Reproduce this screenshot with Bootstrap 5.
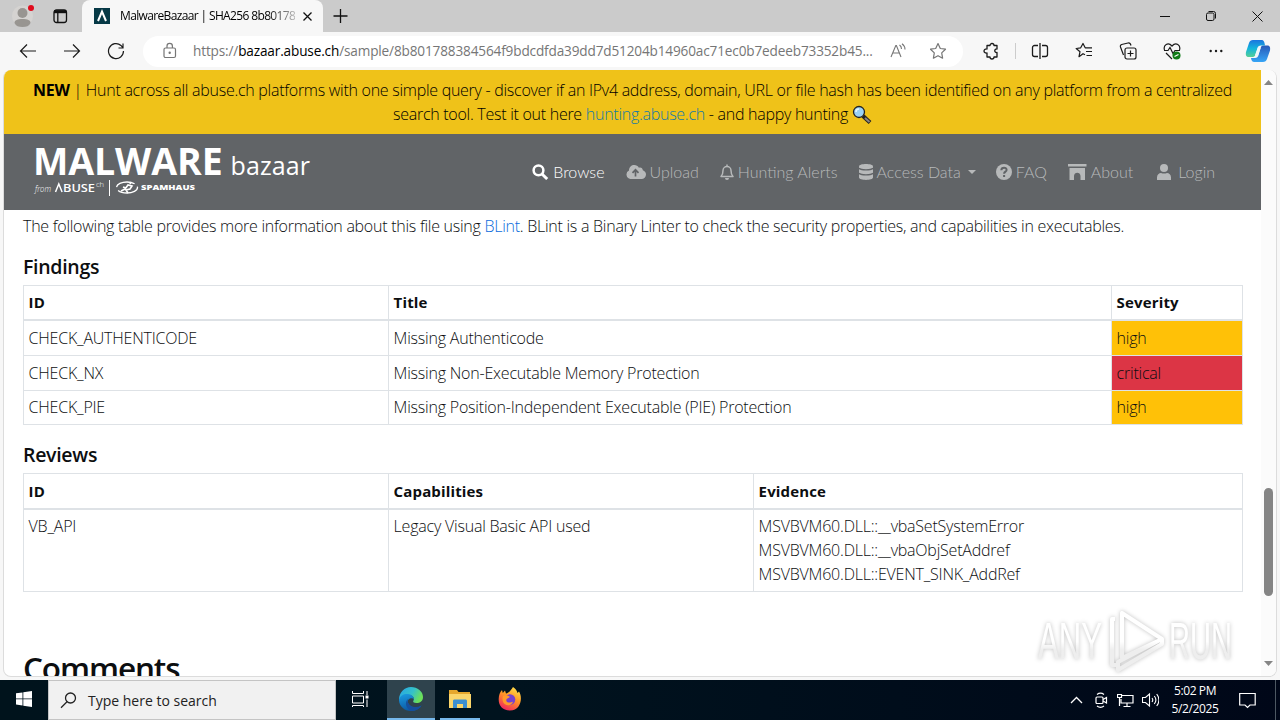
<!DOCTYPE html>
<html lang="en">

<head>
  <meta charset="utf-8" />
  <meta name="viewport" content="width=device-width, initial-scale=1.0" />
  <title>MalwareBazaar | SHA256 8b801788</title>
  <link href="https://cdn.jsdelivr.net/npm/bootstrap@5.3.0/dist/css/bootstrap.min.css" rel="stylesheet">
  <style>
    :root {
      --strip: #cbcbcb;
      --toolbar: #f7f7f7;
      --banner: #efc219;
      --nav-gray: #616467;
      --line: #dee2e6;
    }

    body {
      width: 1280px;
      height: 720px;
      overflow: hidden;
      background: var(--toolbar);
      font-family: "Open Sans", sans-serif;
      color: #0c0e10;
    }

    svg {
      display: block;
      flex: none;
      fill: none;
      stroke: currentColor;
    }

    .solid {
      fill: currentColor;
      stroke: none;
    }

    .tab-strip {
      height: 32px;
      padding: 0 17px 0 12px;
      background: var(--strip);
      color: #111;
    }

    .window-buttons {
      gap: 36px;
    }

    .browser-tab {
      width: 241px;
      height: 32px;
      margin-left: 10px;
      padding: 0 11px 0 12px;
      background: var(--toolbar);
      border-radius: 8px 8px 0 0;
    }

    .tab-title {
      margin-left: 10px;
      font-size: 12px;
      letter-spacing: -.64px;
      white-space: nowrap;
      color: #000;
      -webkit-mask-image: linear-gradient(90deg, #000 84%, rgba(0, 0, 0, .25) 100%);
    }

    .toolbar {
      height: 38px;
      padding-left: 19px;
      color: #1b1b1b;
    }

    .nav-buttons {
      gap: 26px;
    }

    .address {
      width: 820px;
      height: 31px;
      margin-left: 18px;
      padding-left: 19px;
      background: #fff;
      border-radius: 16px;
      color: #767676;
    }

    .url {
      width: 681px;
      margin-left: 16px;
      font-size: 13.6px;
      letter-spacing: -.15px;
      white-space: nowrap;
    }

    .viewport-frame {
      width: 1274px;
      height: 607px;
      margin-left: 3px;
      border: 1px solid #dcdcdc;
      border-top: 0;
      border-radius: 8px;
      background: #fff;
    }

    .page {
      width: 1257px;
      height: 606px;
      font-weight: 300;
      letter-spacing: -.26px;
    }

    .banner {
      height: 64px;
      padding-top: 8px;
      background: var(--banner);
      color: #000;
      line-height: 24px;
      letter-spacing: -.27px;
    }

    .banner a {
      color: #1379a8;
    }

    .site-nav {
      height: 76px;
      padding: 0 46px 0 29px;
      background: var(--nav-gray);
      color: #b7b9ba;
      font-family: Lato, sans-serif;
      letter-spacing: 0;
    }

    .logo-row {
      height: 32px;
      gap: 8px;
    }

    .logo-big {
      font: 700 37.5px/32px "Open Sans", sans-serif;
      letter-spacing: -.1px;
      color: #fff;
    }

    .logo-small {
      font: 400 25px/32px "Open Sans", sans-serif;
      letter-spacing: .1px;
      color: #fff;
    }

    .site-links {
      gap: 21px;
    }

    .site-links>div {
      display: flex;
      align-items: center;
      gap: 4px;
    }

    .caret-down {
      margin: 0 -1px 0 3px;
      border: 4px solid transparent;
      border-top-color: currentColor;
      border-bottom: 0;
    }

    .content {
      padding: 4px 18px 0 19px;
      line-height: 24px;
    }

    .content p {
      margin-bottom: 17px;
    }

    .content a {
      color: #0a6bdc;
    }

    .content h5 {
      margin-bottom: 6px;
      font-size: 19.5px;
      line-height: 24px;
      font-weight: 600;
      letter-spacing: -.3px;
    }

    .content h2 {
      margin-top: 58px;
      font-size: 31.5px;
      line-height: 36px;
      font-weight: 600;
      letter-spacing: -1.1px;
      white-space: nowrap;
    }

    .grid-table {
      table-layout: fixed;
      margin-bottom: 18px;
      width: 1220px;
      border-color: var(--line);
      color: inherit;
      letter-spacing: -.21px;
    }

    .grid-table> :not(caption)>*>* {
      padding: 4.8px 4.8px 4.8px 4.6px;
      border-width: 1px;
      color: inherit;
    }

    .grid-table>thead>tr>th {
      padding: 4.4px 4.8px 5px 4.6px;
      border-bottom-width: 2px;
      font-weight: 700;
      font-size: 15px;
      letter-spacing: .15px;
    }

    .grid-table td.sev-high {
      background: #ffc107;
    }

    .grid-table td.sev-critical {
      background: #dc3545;
    }

    .col-id {
      width: 365px;
    }

    .col-sev {
      width: 131px;
    }

    .scrollbar {
      width: 15px;
      padding: 10px 0 10px;
      background: #fbfbfb;
      color: #858585;
    }

    .thumb {
      width: 9px;
      height: 108px;
      margin: 403px 0 auto;
      border-radius: 5px;
      background: #858585;
    }

    .watermark {
      left: 1030px;
      top: 602px;
      filter: drop-shadow(0 0 2px rgba(0, 0, 0, .25));
    }

    .taskbar {
      height: 40px;
      margin-top: 3px;
      background: linear-gradient(90deg, #00131c, #00131e 40%, #000718);
      color: #fff;
    }

    .search-box {
      width: 288px;
      height: 40px;
      padding-left: 11px;
      gap: 11px;
      background: #f1f1f1;
      border: 1px solid #c4c4c4;
      color: #222;
      font-size: 14px;
    }

    .task-app {
      width: 48px;
      height: 40px;
      border-bottom: 2px solid transparent;
    }

    .task-app.running {
      border-bottom-color: #76b9ed;
    }

    .task-app.slim {
      width: 40px;
      margin-left: 5px;
    }

    .task-app.focused {
      margin-left: 3px;
      background: #2f434d;
    }

    .clock {
      width: 54px;
      margin: 0 17px 0 9px;
      font-size: 12px;
      line-height: 18px;
      letter-spacing: -.4px;
    }

    .show-desktop {
      height: 40px;
      margin: 0 4px 0 19px;
      border-left: 1px solid #4d5862;
    }
  </style>
</head>

<body>
  <header class="tab-strip d-flex align-items-center">
    <svg width="22" height="24" viewBox="0 0 22 24">
      <circle cx="10.500" cy="12" r="10.500" fill="#d5d3d1" stroke="none" />
      <circle cx="10.500" cy="9" r="5" fill="#989591" stroke="none" />
      <path d="M2.500 19c0-3 3-4 8-4s8 1 8 4c-1.500 3-4 4-8 4s-6.500-1-8-4z" fill="#989591" stroke="none" />
      <circle cx="19" cy="4" r="3" fill="#e00b1c" stroke="none" />
    </svg>
    <svg width="18" height="16" viewBox="-2 0 18 16" stroke-width="1.300" class="ms-3 me-1">
      <rect x="2" y="2" width="12.500" height="12.500" rx="2.500" />
      <path d="M2 3.700h12" stroke-width="3" /><path d="M5.800 4v10" />
    </svg>
    <div class="browser-tab d-flex align-items-center">
      <svg width="16" height="16" viewBox="0 0 16 16">
        <rect width="16" height="16" fill="#063946" stroke="none" />
        <path d="M4 13 8 3.500l4 9.500" stroke="#fff" stroke-width="2" />
      </svg>
      <span class="tab-title">MalwareBazaar | SHA256 8b80178</span>
      <svg width="9" height="9" viewBox="0 0 9 9" stroke-width="1.300" class="ms-auto"><path d="m.5.5 8 8m0-8-8 8" /></svg>
    </div>
    <svg width="34" height="14" viewBox="0 0 34 14" stroke-width="1.300"><path d="M17.500 0v14M10.500 7h14" /></svg>
    <div class="window-buttons d-flex align-items-center ms-auto">
      <svg width="10" height="10" viewBox="0 0 10 10"><path d="M0 5.500h10" /></svg>
      <svg width="10" height="10" viewBox="0 0 10 10"><rect x=".5" y="2" width="7.500" height="7.500" rx="1.500" /><path d="M2.500.5h5a2 2 0 0 1 2 2v5" /></svg>
      <svg width="11" height="11" viewBox="0 0 11 11"><path d="m.5.5 10 10m0-10-10 10" /></svg>
    </div>
  </header>

  <div class="toolbar d-flex align-items-center">
    <div class="nav-buttons d-flex align-items-center">
      <svg width="18" height="16" viewBox="0 0 18 16" stroke-width="1.200"><path d="M17 8H1.500M8 1.500 1.500 8 8 14.500" /></svg>
      <svg width="18" height="16" viewBox="0 0 18 16" stroke-width="1.200"><path d="M1 8h15.500M10 1.500 16.500 8 10 14.500" /></svg>
      <svg width="18" height="18" viewBox="0 0 18 18" stroke-width="1.200"><path d="M16.500 9A7.500 7.500 0 1 1 14 3.500L16 6M16 1.500V6h-4.500" /></svg>
    </div>
    <div class="address d-flex align-items-center">
      <svg width="15" height="18" viewBox="0 0 15 18" stroke-width="1.200"><rect x="2" y="6" width="11.500" height="9.500" rx="1.500" /><path d="M5 6V4a2.700 2.700 0 0 1 5.400 0v2" /><circle cx="7.700" cy="10.800" r=".6" /></svg>
      <div class="url">https://<span class="text-black">bazaar.abuse.ch</span>/sample/8b801788384564f9bdcdfda39dd7d51204b14960ac71ec0b7edeeb73352b45...</div>
      <svg width="16" height="16" viewBox="0 0 16 16" stroke-width="1.100" class="ms-3"><path d="M1 14 5.800 2.500h.6L11 14M2.800 10h6.400M9.500 2c1.500 1 2 2.300 2 4M12 .8C14.300 2.500 15 4 15 6.500" /></svg>
      <svg width="18" height="18" viewBox="0 0 18 18" stroke-width="1.200" stroke-linejoin="round" class="ms-4"><path d="m8 1.500 2.300 5 5.200.7-3.800 3.700.9 5.300L8 13.700l-4.600 2.500.9-5.300L.5 7.200l5.200-.7z" /></svg>
    </div>
    <svg width="38" height="18" viewBox="-19 0 38 18" stroke-width="1.300" stroke-linejoin="round"><path d="M5 3.500h3a2 2 0 0 1 4 0h3V7c-3-.5-3 4 0 3.500V15h-3a2 2 0 0 1-4 0H5v-4C1 11.500 1 6.500 5 7z" /></svg>
    <svg width="30" height="18" viewBox="0 0 30 18"><path d="M14.500 1v16" stroke="#ccc" /></svg>
    <div class="nav-buttons d-flex align-items-center">
      <svg width="18" height="18" viewBox="0 0 18 18" stroke-width="1.300"><path d="M9 1v16M7 3.500H3.500a2 2 0 0 0-2 2v7a2 2 0 0 0 2 2H7M11 3.500h3.500a2 2 0 0 1 2 2v7a2 2 0 0 1-2 2H11" /></svg>
      <svg width="18" height="18" viewBox="0 0 18 18" stroke-width="1.200" stroke-linejoin="round"><path d="M10 12.800 8 11.700l-4 3 1-5L1.200 6.500l4.500-.7L8 1.500l2.200 4.300H17M11 9.500h6M11.500 13.500H17" /></svg>
      <svg width="18" height="18" viewBox="0 0 18 18" stroke-width="1.200"><rect x="6" y="6" width="11" height="11" rx="2" /><path d="M11.500 8.500v6M8.500 11.500h6M4.500 13 1.500 5a2 2 0 0 1 1.200-2.500L9 1c1.500-.3 2.500.5 3 2.500" /></svg>
      <svg width="18" height="18" viewBox="0 0 18 18" stroke-width="1.200"><path d="M1.500 8C0 3 5-.5 9 4c4-4.500 9-1 7.500 4M1 8.500h4L7 5.500l3 6 2-3h5M3 11l6 6" /><circle cx="13.500" cy="13.500" r="4" fill="#0f7b16" stroke="none" /><path d="m11.500 14.500 4-2" stroke="#fff" /></svg>
      <svg width="18" height="4" viewBox="-2 0 18 4" class="solid"><circle cx="1.700" cy="2" r="1.200" /><circle cx="7" cy="2" r="1.200" /><circle cx="12.300" cy="2" r="1.200" /></svg>
    </div>
    <svg width="46" height="24" viewBox="-20 0 46 24">
      <defs>
        <linearGradient id="copA" x2="0" y2="1"><stop stop-color="#1a75df" /><stop offset=".5" stop-color="#13b5dc" /><stop offset="1" stop-color="#56cf96" /></linearGradient>
        <linearGradient id="copB" x2="0" y2="1"><stop stop-color="#2759b8" /><stop offset="1" stop-color="#36a5f6" /></linearGradient>
      </defs>
      <path d="M18 23h-8c-3 0-3.500-1.500-4-4h4c2 0 3-1 3.500-3l2-7c.6-2 1.500-2.500 4-2.500H22c3 0 3.500 2 3 5L22 20c-.6 2-2 3-4 3z" fill="url(#copB)" stroke="none" />
      <path d="M8 1h8c3 0 3.500 2 4 5.500h-4c-2 0-3 1-3.500 3l-2 6c-.6 2-1.500 2.500-4 2.500H4c-3 0-3.500-2-3-5L4 4c.6-2 2-3 4-3z" fill="url(#copA)" stroke="none" />
      <path d="m14.500 8-3 8.500" stroke="#eef6fb" stroke-width="3" />
    </svg>
  </div>

  <div class="viewport-frame d-flex overflow-hidden">
    <div class="page overflow-hidden">
      <div class="banner text-center">
        <span class="fw-bold">NEW</span> | Hunt across all abuse.ch platforms with one simple query - discover if an IPv4 address, domain, URL or file hash has been identified on any platform from a centralized<br>
        search tool. Test it out here <a href="#" class="text-decoration-none">hunting.abuse.ch</a> - and happy hunting
        <svg width="20" height="20" viewBox="0 0 20 20" class="d-inline-block align-text-bottom"><path d="m11 11 7 6.500" stroke="#222" stroke-width="4" /><path d="m13 13 4.500 4" stroke="#8b8680" stroke-width="2" /><circle cx="7" cy="7" r="5.500" fill="#9bd2f5" stroke="#222" stroke-width="1.300" /><path d="M4 7a3 3 0 0 1 3-3" stroke="#e6f6ff" stroke-width="1.500" /></svg>
      </div>

      <nav class="site-nav d-flex align-items-center">
        <div class="me-auto">
          <div class="logo-row d-flex align-items-baseline"><span class="logo-big">MALWARE</span><span class="logo-small">bazaar</span></div>
          <svg width="170" height="22" viewBox="-1 -1 170 22" class="text-white">
            <g class="solid" font-family="Open Sans">
              <text x="1" y="14" font-size="8.500" font-style="italic" textLength="16" lengthAdjust="spacingAndGlyphs">from</text>
              <text x="29" y="14" font-size="11.500" font-weight="600" textLength="32" lengthAdjust="spacingAndGlyphs">BUSE</text>
              <text x="62" y="9" font-size="7.500" textLength="8">ch</text>
              <text x="107" y="12" font-size="7.500" font-weight="800" textLength="54" lengthAdjust="spacingAndGlyphs">SPAMHAUS</text>
            </g>
            <path d="m21.500 14 3.300-8 3.300 8" stroke-width="1.500" />
            <path d="M75.500 2v16" />
            <ellipse cx="93" cy="9.500" rx="10.500" ry="5.500" stroke-width="1.300" stroke-dasharray="22 4 20 4" />
            <path d="m87 13 4-2 3-4 4 1-2 3-4 1 2 3m-5-6 3 1m4-4 1-2" stroke-width="1.600" />
          </svg>
        </div>
        <div class="site-links d-flex align-items-center">
          <div class="text-white">
            <svg width="17" height="16" viewBox="0 0 17 16"><circle cx="6.500" cy="6.300" r="4.900" stroke-width="2.500" /><path d="m10 10 5.200 5" stroke-width="3" /></svg>
            <span>Browse</span>
          </div>
          <div>
            <svg width="20" height="16" viewBox="0 0 20 16"><path class="solid" d="M4.500 15A4.500 4.500 0 0 1 3 6.500C3 3 5.500 1 8.300 1c2 0 3.700 1 4.600 2.700 2-.8 3.900.6 3.900 2.600C18.800 7 20 8.600 20 10.500c0 2.500-2 4.500-4.500 4.500z" /><path d="M9.500 12.500V6M6.500 8.800l3-3 3 3" stroke="#616467" stroke-width="1.700" /></svg>
            <span>Upload</span>
          </div>
          <div>
            <svg width="14" height="17" viewBox="0 0 14 17" stroke-width="1.500"><path d="M1 12.500c2-2 2-3.500 2-6a4 4 0 0 1 8 0c0 2.500 0 4 2 6zM7 .5v2" stroke-linejoin="round" /><path class="solid" d="M5 14h4a2 2 0 0 1-4 0z" /></svg>
            <span>Hunting Alerts</span>
          </div>
          <div>
            <svg width="14" height="16" viewBox="0 0 14 16"><path class="solid" d="M0 2.500C0-.7 14-.7 14 2.500v11c0 3.200-14 3.200-14 0z" /><path d="M0 4.300c2 2 12 2 14 0M0 9.300c2 2 12 2 14 0" stroke="#616467" stroke-width="1.300" /></svg>
            <span>Access Data</span><span class="caret-down"></span>
          </div>
          <div>
            <svg width="16" height="16" viewBox="0 0 16 16"><circle class="solid" cx="8" cy="8" r="8" /><path d="M5.300 6.200C5.500 2.700 10.800 3 10.600 6c-.1 1.700-2.500 1.700-2.500 3.700M8.100 11v2" stroke="#616467" stroke-width="2" /></svg>
            <span>FAQ</span>
          </div>
          <div>
            <svg width="19" height="16" viewBox="0 0 19 16" class="solid"><path d="M0 0h18.500v2.500H0zM1.500 4H17v12h-4.500v-4c0-4.500-6.500-4.500-6.500 0v4H1.500z" /></svg>
            <span>About</span>
          </div>
          <div>
            <svg width="20" height="16" viewBox="-3 0 20 16" class="solid"><circle cx="7" cy="4" r="4" /><path d="M0 16v-2.500C0 10.500 2 9 4 9c2 .8 4 .8 6 0 2 0 4 1.500 4 4.500V16z" /></svg>
            <span>Login</span>
          </div>
        </div>
      </nav>

      <main class="content">
        <p>The following table provides more information about this file using <a href="#" class="text-decoration-none">BLint</a>. BLint is a Binary Linter to check the security properties, and capabilities in executables.</p>

        <h5>Findings</h5>
        <table class="table grid-table">
          <colgroup><col class="col-id"><col><col class="col-sev"></colgroup>
          <thead>
            <tr><th>ID</th><th>Title</th><th>Severity</th></tr>
          </thead>
          <tbody>
            <tr><td>CHECK_AUTHENTICODE</td><td>Missing Authenticode</td><td class="sev-high">high</td></tr>
            <tr><td>CHECK_NX</td><td>Missing Non-Executable Memory Protection</td><td class="sev-critical">critical</td></tr>
            <tr><td>CHECK_PIE</td><td>Missing Position-Independent Executable (PIE) Protection</td><td class="sev-high">high</td></tr>
          </tbody>
        </table>

        <h5>Reviews</h5>
        <table class="table grid-table">
          <colgroup><col class="col-id"><col class="col-id"><col></colgroup>
          <thead>
            <tr><th>ID</th><th>Capabilities</th><th>Evidence</th></tr>
          </thead>
          <tbody>
            <tr>
              <td>VB_API</td>
              <td>Legacy Visual Basic API used</td>
              <td>MSVBVM60.DLL::__vbaSetSystemError<br>MSVBVM60.DLL::__vbaObjSetAddref<br>MSVBVM60.DLL::EVENT_SINK_AddRef</td>
            </tr>
          </tbody>
        </table>

        <h2>Comments</h2>
      </main>
    </div>
    <div class="scrollbar d-flex flex-column align-items-center">
      <svg width="9" height="5" viewBox="0 0 9 5" class="solid"><path d="M0 5 4.500 0 9 5z" /></svg>
      <div class="thumb"></div>
      <svg width="9" height="5" viewBox="0 0 9 5" class="solid"><path d="m0 0 4.500 5L9 0z" /></svg>
    </div>
  </div>

  <footer class="taskbar d-flex align-items-center">
    <div class="task-app d-flex align-items-center justify-content-center">
      <svg width="16" height="16" viewBox="0 0 16 16" class="solid"><path d="m0 2.300 6.500-.9v6.100H0zM7.300 1.300 16 0v7.500H7.300zM0 8.300h6.500v6.100L0 13.500zM7.300 8.300H16V16l-8.700-1.300z" /></svg>
    </div>
    <div class="search-box d-flex align-items-center">
      <svg width="17" height="17" viewBox="0 0 17 17" stroke-width="1.300"><circle cx="10.500" cy="6" r="5" /><path d="m7 9.700-6 6" /></svg>
      <span>Type here to search</span>
    </div>
    <div class="task-app d-flex align-items-center justify-content-center">
      <svg width="17" height="16" viewBox="0 0 17 16"><path d="M.5 0v2.500h11V0M.5 5h11v7H.5zM.5 16v-1.500h11V16M15 0v4M15 8.500V16" /><path class="solid" d="M13.500 4.500h3v3h-3z" /></svg>
    </div>
    <div class="task-app running focused d-flex align-items-center justify-content-center">
      <svg width="24" height="24" viewBox="0 0 24 24">
        <defs>
          <linearGradient id="edgeTop" y2=".4"><stop stop-color="#25a4e8" /><stop offset=".6" stop-color="#35c1c9" /><stop offset="1" stop-color="#6be05a" /></linearGradient>
          <linearGradient id="edgeLow" x2=".3" y2="1"><stop stop-color="#1b9de2" /><stop offset="1" stop-color="#0c59a4" /></linearGradient>
        </defs>
        <g stroke="none">
          <path d="M0 12C.5 5 5.500 0 12 0s12 4.500 12 10c0 4-3 6-6.500 6-3 0-4-1-3-2.500C16 11 13.500 8 9.500 8 5 8 1.500 10 0 14z" fill="url(#edgeTop)" />
          <path d="M0 12.500C1 8.500 5 6.500 9 7c3.500.3 6 2.700 6 5.500-1-1.300-2.500-1.500-4-1-3 1-3 5 .5 7.500 3 2 7.500 2 11-.5C20 22.500 16 24 12 24 5 24-.3 18.500 0 12.500z" fill="url(#edgeLow)" />
          <path d="M9 12c-3.500 3-2.500 9 3 12 4 0 8-1.500 10.500-5.500-4 2-8 2-11 0C8.800 16.500 8 14 9 12z" fill="#164f9d" />
        </g>
      </svg>
    </div>
    <div class="task-app running slim d-flex align-items-center justify-content-center">
      <svg width="22" height="20" viewBox="0 0 22 20"><g stroke="none"><path d="M0 1h8l1.500 2H21v16H0z" fill="#e6a72c" /><path d="M0 5h22v14H0z" fill="#fbd56a" /><path d="M4 19v-7c0-1 .7-1.500 1.500-1.500h11c.8 0 1.500.5 1.500 1.500v7h-4v-4H8v4z" fill="#3d8fd0" /></g></svg>
    </div>
    <div class="task-app d-flex align-items-center justify-content-center ms-1 ps-1">
      <svg width="24" height="24" viewBox="0 0 24 24">
        <defs><linearGradient id="fox" x1=".8" x2=".3" y2="1"><stop stop-color="#ffe34d" /><stop offset=".45" stop-color="#ff9825" /><stop offset="1" stop-color="#f0245e" /></linearGradient></defs>
        <g stroke="none">
          <path d="M15 0c3 2 4 4 4.500 6l1.500-1.500c4 6 2 19-9 19C4 23.500.5 18 .7 12 .8 8 2 5 4 3l.8 3L7 3.500l1 3C11 6 13 3 15 0z" fill="url(#fox)" />
          <circle cx="12" cy="12.500" r="5.300" fill="#7641cf" />
          <path d="M5 9c2-1.500 5-1 7 1l-2.500 1.500c-2 .8-1.500 3.500 1 4 2 .3 3-.8 4.500-.8-1 3.500-5 4.500-8 2.500C4.500 15.500 4 12 5 9z" fill="#ff9a2b" />
        </g>
      </svg>
    </div>

    <div class="d-flex align-items-center gap-2 ms-auto">
      <svg width="16" height="16" viewBox="0 0 16 16" stroke-width="1.300"><path d="m2 11 5.500-5.500L13 11" /></svg>
      <svg width="16" height="16" viewBox="-1 0 16 16" stroke-width="1.200"><rect x="2" y="5" width="7" height="6.500" rx="1" /><path d="m9 7.500 3.500-2v5.500L9 9M3 2.500c2-1.500 5-1.500 7 0M3 14c2 1.500 5 1.500 7 0" /></svg>
      <svg width="17" height="16" viewBox="0 0 17 16" stroke-width="1.200"><path d="M5 3.500h11v7.500H4V7M10 11v3M6.500 14.500h7M.5 2.500h4v3h-4zM2.500 5.500V14" /></svg>
      <svg width="17" height="16" viewBox="0 0 17 16" stroke-width="1.100"><path d="M.5 5.500h3l4-3.500v12l-4-3.500h-3zM10 6c1 1.300 1 2.700 0 4M12.300 4c2 2.500 2 5.500 0 8M14.700 2c3 4 3 8 0 12" /></svg>
    </div>
    <div class="clock text-center">5:02 PM<br>5/2/2025</div>
    <svg width="17" height="17" viewBox="0 0 17 17" stroke-width="1.200"><path d="M.7 1.500h15.500V13H11l-2.500 2.500L6 13H.7z" /></svg>
    <div class="show-desktop"></div>
  </footer>

  <svg class="watermark position-absolute" width="210" height="75" viewBox="0 0 210 75" stroke-linejoin="round">
    <defs><linearGradient id="fade" x2="0" y2="1"><stop offset=".5" stop-color="#fff" /><stop offset=".65" stop-color="#eee" /></linearGradient></defs>
    <g font-family="Liberation Sans" font-size="51" fill="url(#fade)" stroke="none">
      <text x="8" y="57" textLength="64" lengthAdjust="spacingAndGlyphs">ANY</text>
      <text x="139" y="57" textLength="63" lengthAdjust="spacingAndGlyphs">RUN</text>
    </g>
    <path d="M92 11v45l40-19zM85 17h-3v46h4M88 60v8l44-26v-5z" stroke="url(#fade)" stroke-width="4" />
  </svg>

  <script src="https://cdn.jsdelivr.net/npm/bootstrap@5.3.0/dist/js/bootstrap.bundle.min.js"></script>
</body>

</html>
